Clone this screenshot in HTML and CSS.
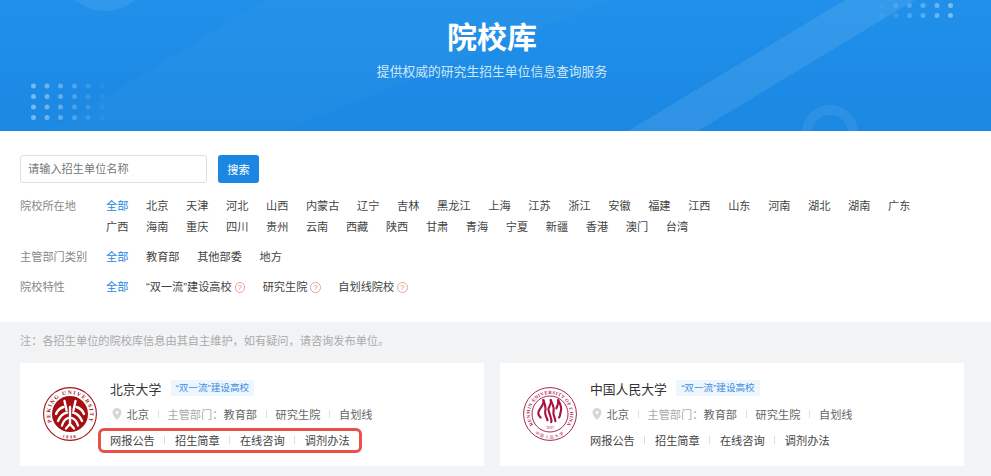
FILE: index.html
```html
<!DOCTYPE html>
<html lang="zh-CN">
<head>
<meta charset="utf-8">
<title>院校库</title>
<link rel="stylesheet" href="styles.css">
</head>
<body>
<header class="banner">
  <svg class="banner-art" viewBox="0 0 991 131" width="991" height="131" aria-hidden="true">
    <circle cx="105" cy="-35" r="46" fill="#fff" fill-opacity=".08"/>
    <path d="M50 131 L264 0 L610 0 L283 131 Z" fill="#fff" fill-opacity=".025"/>
    <path d="M628 131 L845 0 L915 0 L698 131 Z" fill="#fff" fill-opacity=".09"/>
    <circle cx="830" cy="133" r="23" fill="none" stroke="#fff" stroke-opacity=".07" stroke-width="10"/>
    <g fill="#fff">
      <g fill-opacity=".4"><circle cx="33.500" cy="86" r="2.500"/><circle cx="33.500" cy="96.500" r="2.500"/><circle cx="33.500" cy="107" r="2.500"/><circle cx="33.500" cy="117.500" r="2.500"/></g>
      <g fill-opacity=".36"><circle cx="47" cy="86" r="2.500"/><circle cx="47" cy="96.500" r="2.500"/><circle cx="47" cy="107" r="2.500"/><circle cx="47" cy="117.500" r="2.500"/></g>
      <g fill-opacity=".3"><circle cx="60.500" cy="86" r="2.500"/><circle cx="60.500" cy="96.500" r="2.500"/><circle cx="60.500" cy="107" r="2.500"/><circle cx="60.500" cy="117.500" r="2.500"/></g>
      <g fill-opacity=".22"><circle cx="74.500" cy="86" r="2.500"/><circle cx="74.500" cy="96.500" r="2.500"/><circle cx="74.500" cy="107" r="2.500"/><circle cx="74.500" cy="117.500" r="2.500"/></g>
      <g fill-opacity=".13"><circle cx="88" cy="86" r="2.500"/><circle cx="88" cy="96.500" r="2.500"/><circle cx="88" cy="107" r="2.500"/><circle cx="88" cy="117.500" r="2.500"/></g>
      <g fill-opacity=".05"><circle cx="102" cy="86" r="2.500"/><circle cx="102" cy="96.500" r="2.500"/><circle cx="102" cy="107" r="2.500"/><circle cx="102" cy="117.500" r="2.500"/></g>
      <g fill-opacity=".05"><circle cx="882" cy="5.500" r="2.500"/><circle cx="882" cy="15.500" r="2.500"/></g>
      <g fill-opacity=".12"><circle cx="896" cy="5.500" r="2.500"/><circle cx="896" cy="15.500" r="2.500"/></g>
      <g fill-opacity=".2"><circle cx="909.500" cy="5.500" r="2.500"/><circle cx="909.500" cy="15.500" r="2.500"/></g>
      <g fill-opacity=".27"><circle cx="923" cy="5.500" r="2.500"/><circle cx="923" cy="15.500" r="2.500"/></g>
      <g fill-opacity=".33"><circle cx="937" cy="5.500" r="2.500"/><circle cx="937" cy="15.500" r="2.500"/></g>
      <g fill-opacity=".4"><circle cx="950.500" cy="5.500" r="2.500"/><circle cx="950.500" cy="15.500" r="2.500"/></g>
    </g>
  </svg>
  <h1 class="banner-title">院校库</h1>
  <p class="banner-sub">提供权威的研究生招生单位信息查询服务</p>
</header>

<section class="filters">
  <form class="search">
    <input class="search-input" type="text" placeholder="请输入招生单位名称">
    <button class="search-btn" type="button">搜索</button>
  </form>
  <div class="filter-row filter-row-wrap">
    <div class="filter-label">院校所在地</div>
    <div class="filter-values wide">
      <a class="active">全部</a><a>北京</a><a>天津</a><a>河北</a><a>山西</a><a>内蒙古</a><a>辽宁</a><a>吉林</a><a>黑龙江</a><a>上海</a><a>江苏</a><a>浙江</a><a>安徽</a><a>福建</a><a>江西</a><a>山东</a><a>河南</a><a>湖北</a><a>湖南</a><a>广东</a><a>广西</a><a>海南</a><a>重庆</a><a>四川</a><a>贵州</a><a>云南</a><a>西藏</a><a>陕西</a><a>甘肃</a><a>青海</a><a>宁夏</a><a>新疆</a><a>香港</a><a>澳门</a><a>台湾</a>
    </div>
  </div>
  <div class="filter-row">
    <div class="filter-label">主管部门类别</div>
    <div class="filter-values">
      <a class="active">全部</a><a>教育部</a><a>其他部委</a><a>地方</a>
    </div>
  </div>
  <div class="filter-row">
    <div class="filter-label">院校特性</div>
    <div class="filter-values">
      <a class="active">全部</a>
      <a class="with-help">“双一流”建设高校<span class="help">?</span></a>
      <a class="with-help">研究生院<span class="help">?</span></a>
      <a class="with-help">自划线院校<span class="help">?</span></a>
    </div>
  </div>
</section>

<main class="results">
  <p class="note">注：各招生单位的院校库信息由其自主维护，如有疑问，请咨询发布单位。</p>
  <div class="cards">
    <article class="card">
      <svg class="logo" viewBox="0 0 54 54" width="54" height="54" role="img" aria-label="北京大学校徽">
        <defs>
          <path id="pku-top" d="M14.270 42.170 A19.800 19.800 0 1 1 39.730 42.170"/>
          <path id="pku-bot" d="M14.750 48.200 A24.500 24.500 0 0 0 39.250 48.200"/>
        </defs>
        <circle cx="27" cy="27" r="26.400" fill="#fff" stroke="#a3161b" stroke-width="1.100"/>
        <circle cx="27" cy="27" r="18" fill="#a30f13"/>
        <text class="seal-text pku"><textPath href="#pku-top" startOffset="50%" text-anchor="middle">PEKING UNIVERSITY</textPath></text>
        <text class="seal-text pku-year"><textPath href="#pku-bot" startOffset="50%" text-anchor="middle">1898</textPath></text>
        <g fill="none" stroke="#fff" stroke-width="2.400" stroke-linecap="round">
          <path d="M21.500 14 L23.500 23"/>
          <path d="M32.500 14 L30.500 23"/>
          <path d="M20.500 20 C17 21 14.500 23.500 13 27"/>
          <path d="M33.500 20 C37 21 39.500 23.500 41 27"/>
          <path d="M24 25.500 C20 26.500 17 29.500 15 34"/>
          <path d="M30 25.500 C34 26.500 37 29.500 39 34"/>
          <path d="M25 31 C22.500 32 20 35 19 38.500"/>
          <path d="M29 31 C31.500 32 34 35 35 38.500"/>
          <path d="M27 20 L27 36"/>
          <path d="M23 41.500 L27 37 L31 41.500"/>
        </g>
      </svg>
      <div class="info">
        <div class="name-row"><h3 class="name">北京大学</h3><span class="tag">“双一流”建设高校</span></div>
        <div class="meta">
          <svg class="pin" viewBox="0 0 10 12" width="10" height="12" aria-hidden="true"><path fill-rule="evenodd" d="M5 0a4.500 4.500 0 0 1 4.500 4.500C9.500 7.500 5 12 5 12S.5 7.500.5 4.500A4.500 4.500 0 0 1 5 0zm0 3a1.500 1.500 0 1 0 0 3 1.500 1.500 0 0 0 0-3z"/></svg>
          <span>北京</span><i class="sep"></i><span><span class="muted">主管部门：</span>教育部</span><i class="sep"></i><span>研究生院</span><i class="sep"></i><span>自划线</span>
        </div>
        <div class="links">
          <a>网报公告</a><i class="sep"></i><a>招生简章</a><i class="sep"></i><a>在线咨询</a><i class="sep"></i><a>调剂办法</a>
          <span class="callout"></span>
        </div>
      </div>
    </article>
    <article class="card">
      <svg class="logo" viewBox="0 0 54 54" width="54" height="54" role="img" aria-label="中国人民大学校徽">
        <defs>
          <path id="ruc-top" d="M11.680 39.860 A20 20 0 1 1 42.320 39.860"/>
          <path id="ruc-bot" d="M12 46.400 A24.500 24.500 0 0 0 42 46.400"/>
        </defs>
        <circle cx="27" cy="27" r="26.400" fill="#fff" stroke="#a8284e" stroke-width="1"/>
        <circle cx="27" cy="27" r="18" fill="#fff" stroke="#a8284e" stroke-width="1"/>
        <text class="seal-text ruc"><textPath href="#ruc-top" startOffset="50%" text-anchor="middle">RENMIN UNIVERSITY OF CHINA</textPath></text>
        <text class="ruc-cn"><textPath href="#ruc-bot" startOffset="50%" text-anchor="middle">中国人民大学</textPath></text>
        <g fill="none" stroke="#a8123f" stroke-width="2.300" stroke-linecap="round" transform="translate(2 .2) scale(.92)">
          <path d="M20 14 C21 18 19 20 16 24 C13 28 15 31 17 33"/>
          <path d="M20 14 C22 19 23 22 22 26 C21 30 24 33 24.500 36"/>
          <path d="M28 14 C29 18 27 20 25.500 23 C25 25 27 29 28 33 C29 35 29 36 28.500 38"/>
          <path d="M28 14 C30 19 32 22 31 26 C30 30 33 33 33 37"/>
          <path d="M36 14 C37 18 35 20 34 23"/>
          <path d="M36 14 C39 19 40 22 39 26 C38 30 38 32 37 33"/>
        </g>
        <text class="seal-year" x="27" y="41.500" text-anchor="middle">1937</text>
      </svg>
      <div class="info">
        <div class="name-row"><h3 class="name">中国人民大学</h3><span class="tag">“双一流”建设高校</span></div>
        <div class="meta">
          <svg class="pin" viewBox="0 0 10 12" width="10" height="12" aria-hidden="true"><path fill-rule="evenodd" d="M5 0a4.500 4.500 0 0 1 4.500 4.500C9.500 7.500 5 12 5 12S.5 7.500.5 4.500A4.500 4.500 0 0 1 5 0zm0 3a1.500 1.500 0 1 0 0 3 1.500 1.500 0 0 0 0-3z"/></svg>
          <span>北京</span><i class="sep"></i><span><span class="muted">主管部门：</span>教育部</span><i class="sep"></i><span>研究生院</span><i class="sep"></i><span>自划线</span>
        </div>
        <div class="links">
          <a>网报公告</a><i class="sep"></i><a>招生简章</a><i class="sep"></i><a>在线咨询</a><i class="sep"></i><a>调剂办法</a>
        </div>
      </div>
    </article>
  </div>
</main>
</body>
</html>
```

FILE: styles.css
```css
* { box-sizing: border-box; }
html, body { margin: 0; padding: 0; }
body {
  width: 991px;
  height: 476px;
  overflow: hidden;
  background: #f1f3f5;
  color: #444;
  font-family: "Liberation Sans", "Noto Sans CJK SC", sans-serif;
  font-size: 11.2px;
}

.banner {
  position: relative;
  height: 131px;
  padding: 17px 7px 0 0;
  overflow: hidden;
  text-align: center;
  background: linear-gradient(180deg, #2090ea 0%, #1b88e2 100%);
}
.banner-art { position: absolute; left: 0; top: 0; display: block; }
.banner-title {
  position: relative;
  margin: 0;
  font-size: 30px;
  line-height: 42px;
  font-weight: 700;
  color: #fff;
}
.banner-sub {
  position: relative;
  margin: 0;
  font-size: 12.8px;
  line-height: 26px;
  color: #cde7fb;
}

.filters {
  height: 191px;
  padding: 24px 20px 0;
  background: #fff;
}
.search { display: flex; gap: 11px; margin-bottom: 13px; }
.search-input {
  width: 187px;
  height: 28px;
  padding: 0 7px;
  border: 1px solid #dcdfe3;
  border-radius: 3px;
  outline: none;
  font: inherit;
  color: #555;
}
.search-input::placeholder { color: #777; opacity: 1; }
.search-btn {
  width: 41px;
  height: 28px;
  padding: 0;
  border: 0;
  border-radius: 3px;
  background: #1c87e2;
  color: #fff;
  font: inherit;
}

.filter-row { display: flex; margin-bottom: 9.6px; line-height: 21px; }
.filter-row-wrap { margin-bottom: 8.6px; }
.filter-label { width: 86px; flex: none; color: #888; }
.filter-values { display: flex; flex-wrap: wrap; column-gap: 17.6px; }
.filter-values.wide { width: 840px; }
.filter-values .active { color: #1d87e0; }
.with-help { display: inline-flex; align-items: center; }
.help {
  display: inline-flex;
  align-items: center;
  justify-content: center;
  width: 10.5px;
  height: 10.5px;
  margin-left: 2.8px;
  border: 1px solid #e8a598;
  border-radius: 50%;
  color: #e0907e;
  font-size: 8px;
  line-height: 1;
}

.note {
  margin: 0;
  padding: 11px 0 14px 20px;
  line-height: 16px;
  color: #aaa;
}
.cards { display: grid; grid-template-columns: 464px 464px; column-gap: 16px; padding-left: 20px; }
.card {
  display: flex;
  align-items: center;
  gap: 13px;
  height: 103px;
  padding: 0 0 2px 23px;
  background: #fff;
}
.logo { display: block; flex: none; margin-top: 1px; }
.seal-text { font-family: "Liberation Serif", serif; font-weight: 700; }
.pku { font-size: 5.6px; letter-spacing: 1.15px; fill: #a3161b; }
.pku-year { font-size: 4.5px; letter-spacing: 1.6px; fill: #a3161b; }
.ruc { font-size: 4.9px; letter-spacing: .3px; fill: #a8284e; }
.ruc-cn { font-family: "Noto Sans CJK SC", sans-serif; font-size: 4px; letter-spacing: 1.3px; fill: #a8284e; }
.seal-year { font-family: "Liberation Sans", sans-serif; font-size: 3.4px; fill: #a8123f; }

.info { flex: 1; }
.name-row, .meta, .links { display: flex; align-items: center; }
.name-row { height: 26px; }
.name { margin: 0; font-size: 12.8px; font-weight: 400; color: #333; }
.tag {
  height: 16px;
  margin-left: 9.6px;
  padding: 0 4.8px;
  border-radius: 2px;
  background: #edf5fd;
  color: #3f8ee0;
  font-size: 9.6px;
  line-height: 16px;
}
.meta { height: 26px; color: #666; }
.pin { margin: 0 4.500px 0 2px; flex: none; fill: #d5d8db; }
.muted { color: #aaa; }
.sep { display: block; width: 1px; height: 8px; margin: 0 8.8px; background: #dcdfe3; }
.links { position: relative; height: 25px; color: #444; }
.links .sep { margin: 0 9.6px; }
.callout {
  position: absolute;
  left: -12px;
  top: 1px;
  width: 264px;
  height: 25px;
  border: 3px solid #e9524a;
  border-radius: 6px;
}
```
